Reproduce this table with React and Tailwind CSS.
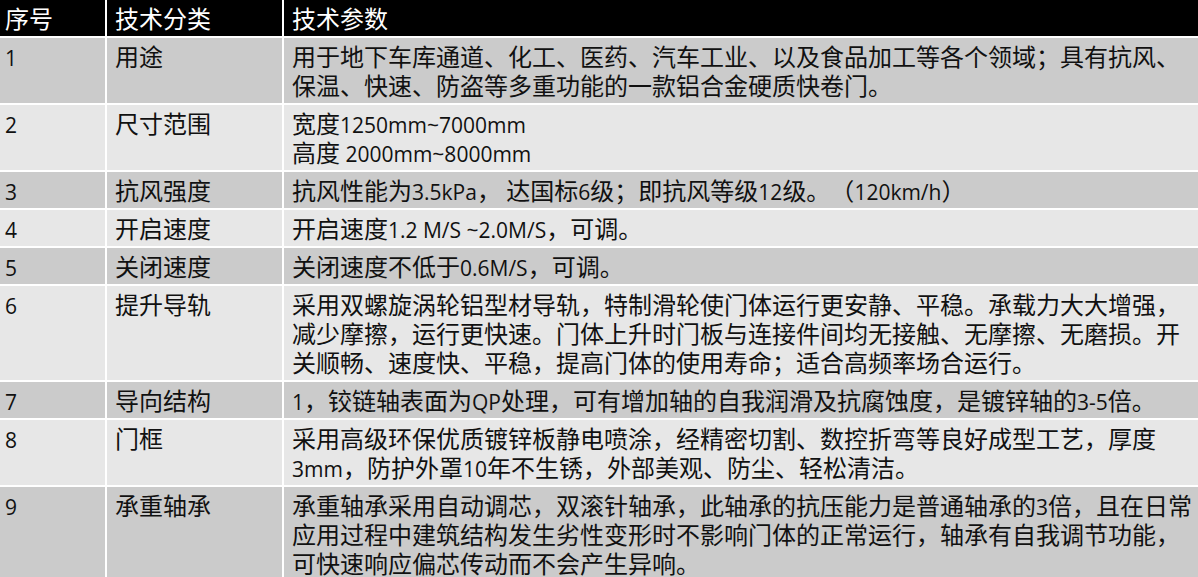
import React from "react";

const rows = [
  ["1", "用途", "用于地下车库通道、化工、医药、汽车工业、以及食品加工等各个领域；具有抗风、保温、快速、防盗等多重功能的一款铝合金硬质快卷门。"],
  ["2", "尺寸范围", "宽度1250mm~7000mm\n高度 2000mm~8000mm"],
  ["3", "抗风强度", "抗风性能为3.5kPa， 达国标6级；即抗风等级12级。（120km/h）"],
  ["4", "开启速度", "开启速度1.2 M/S ~2.0M/S，可调。"],
  ["5", "关闭速度", "关闭速度不低于0.6M/S，可调。"],
  ["6", "提升导轨", "采用双螺旋涡轮铝型材导轨，特制滑轮使门体运行更安静、平稳。承载力大大增强，减少摩擦，运行更快速。门体上升时门板与连接件间均无接触、无摩擦、无磨损。开关顺畅、速度快、平稳，提高门体的使用寿命；适合高频率场合运行。"],
  ["7", "导向结构", "1，铰链轴表面为QP处理，可有增加轴的自我润滑及抗腐蚀度，是镀锌轴的3-5倍。"],
  ["8", "门框", "采用高级环保优质镀锌板静电喷涂，经精密切割、数控折弯等良好成型工艺，厚度3mm，防护外罩10年不生锈，外部美观、防尘、轻松清洁。"],
  ["9", "承重轴承", "承重轴承采用自动调芯，双滚针轴承，此轴承的抗压能力是普通轴承的3倍，且在日常应用过程中建筑结构发生劣性变形时不影响门体的正常运行，轴承有自我调节功能，可快速响应偏芯传动而不会产生异响。"],
];

function Txt({ text }) {
  const lines = text.split("\n");
  return lines.map((line, li) => (
    <React.Fragment key={li}>
      {li > 0 && <br />}
      {line.split(/([A-Za-z0-9.~\-\/ ]+)/).map((part, i) =>
        /^[A-Za-z0-9.~\-\/ ]+$/.test(part) ? (
          <span key={i} className="text-[21px] leading-none font-medium [font-family:'Open_Sans','Noto_Sans',sans-serif]">
            {part}
          </span>
        ) : (
          <React.Fragment key={i}>{part}</React.Fragment>
        )
      )}
    </React.Fragment>
  ));
}

export default function App() {
  return (
    <div className="h-[577px] w-[1198px] overflow-hidden bg-white [font-family:'Noto_Sans_CJK_SC','Noto_Sans',sans-serif] text-[24px] leading-[29px] text-[#111] [text-spacing-trim:space-all]">
      <div className="grid grid-cols-[105px_175px_1fr] gap-[2px] bg-white">
        <div className="bg-black text-white h-[36px] pt-[3px] pl-[5px]">序号</div>
        <div className="bg-black text-white h-[36px] pt-[3px] pl-[8px]">技术分类</div>
        <div className="bg-black text-white h-[36px] pt-[3px] pl-[8px]">技术参数</div>
        {rows.map((r, idx) => {
          const bg = idx % 2 === 0 ? "bg-[#cbcbcb]" : "bg-[#e7e7e7]";
          return (
            <React.Fragment key={idx}>
              <div className={`${bg} pt-[3px] pb-[4px] pl-[5px]`}>
                <Txt text={r[0]} />
              </div>
              <div className={`${bg} pt-[3px] pb-[4px] pl-[8px]`}>{r[1]}</div>
              <div className={`${bg} pt-[3px] pb-[4px] pl-[8px]`}>
                <Txt text={r[2]} />
              </div>
            </React.Fragment>
          );
        })}
      </div>
    </div>
  );
}
